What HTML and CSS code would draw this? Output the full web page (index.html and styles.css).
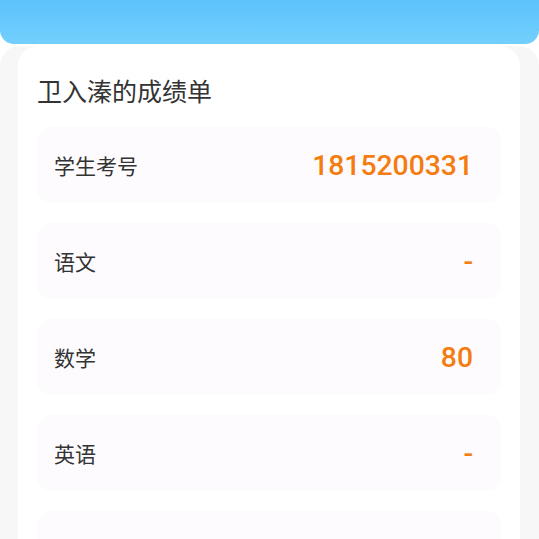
FILE: index.html
```html
<!DOCTYPE html>
<html lang="zh">
<head>
<meta charset="utf-8">
<link rel="stylesheet" href="styles.css">
</head>
<body>
<div class="header"></div>
<div class="panel">
  <div class="card">
    <h1 class="title">卫入溱的成绩单</h1>
    <div class="rows">
      <div class="row"><span class="label">学生考号</span><span class="value">1815200331</span></div>
      <div class="row"><span class="label">语文</span><span class="value">-</span></div>
      <div class="row"><span class="label">数学</span><span class="value">80</span></div>
      <div class="row"><span class="label">英语</span><span class="value">-</span></div>
      <div class="row"></div>
    </div>
  </div>
</div>
</body>
</html>
```

FILE: styles.css
```css
html, body {
  margin: 0;
  padding: 0;
  background: #ffffff;
  font-family: Roboto, "Noto Sans CJK SC", sans-serif;
  overflow: hidden;
  height: 539px;
}
.header {
  height: 44px;
  background: linear-gradient(to bottom, #5cc3fc, #73cffd);
  border-radius: 0 0 14px 14px;
}
.panel {
  background: #f7f7f7;
  border-radius: 20px 20px 0 0;
  margin-top: 2px;
  padding: 0 19px 0 18px;
  height: 600px;
}
.card {
  background: #ffffff;
  border-radius: 20px 20px 0 0;
  padding: 27px 19px 0 19px;
  height: 600px;
}
.title {
  margin: 0;
  font-size: 25px;
  font-weight: 400;
  color: #333333;
  line-height: 40px;
  height: 40px;
}
.rows {
  margin-top: 14px;
  display: flex;
  flex-direction: column;
  gap: 20px;
}
.row {
  height: 76px;
  background: #fdfbfe;
  border-radius: 14px;
  display: flex;
  align-items: center;
  justify-content: space-between;
  padding: 0 28px 0 17px;
}
.label {
  font-size: 21px;
  color: #333333;
}
.value {
  font-size: 28.3px;
  font-weight: 500;
  color: #f57c0e;
}
```
